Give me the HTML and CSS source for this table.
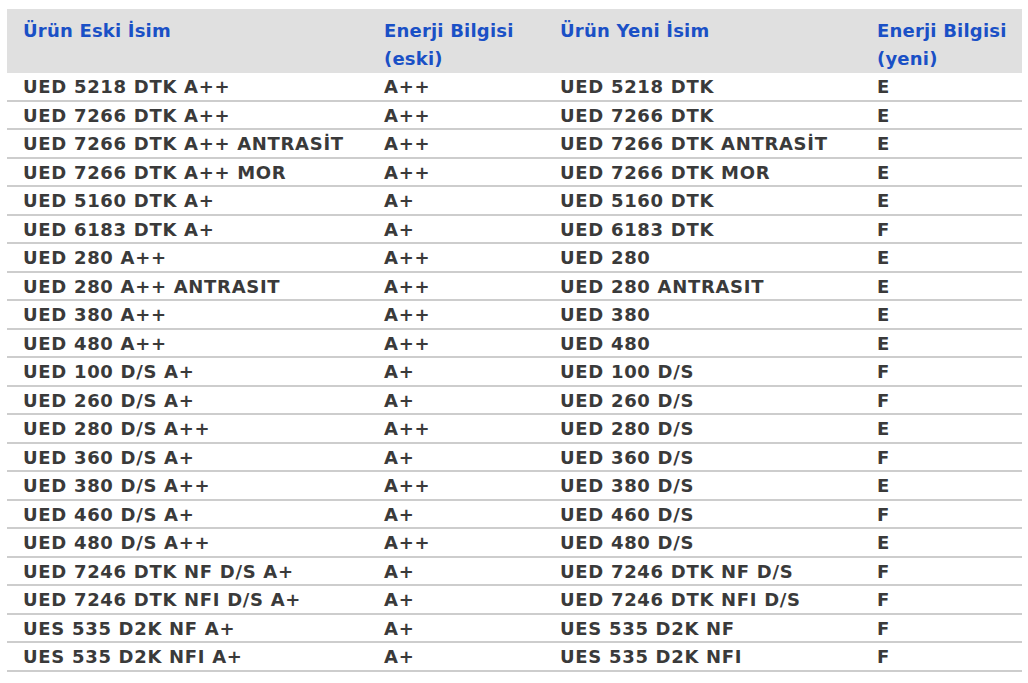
FILE: index.html
```html
<!DOCTYPE html>
<html lang="tr">
<head>
<meta charset="utf-8">
<title>Enerji Bilgisi</title>
<link rel="stylesheet" href="styles.css">
</head>
<body>
<div class="table">
  <div class="row head">
    <div class="cell">Ürün Eski İsim</div>
    <div class="cell">Enerji Bilgisi<br>(eski)</div>
    <div class="cell">Ürün Yeni İsim</div>
    <div class="cell">Enerji Bilgisi<br>(yeni)</div>
  </div>
  <div class="row"><div class="cell">UED 5218 DTK A++</div><div class="cell">A++</div><div class="cell">UED 5218 DTK</div><div class="cell">E</div></div>
  <div class="row"><div class="cell">UED 7266 DTK A++</div><div class="cell">A++</div><div class="cell">UED 7266 DTK</div><div class="cell">E</div></div>
  <div class="row"><div class="cell">UED 7266 DTK A++ ANTRASİT</div><div class="cell">A++</div><div class="cell">UED 7266 DTK ANTRASİT</div><div class="cell">E</div></div>
  <div class="row"><div class="cell">UED 7266 DTK A++ MOR</div><div class="cell">A++</div><div class="cell">UED 7266 DTK MOR</div><div class="cell">E</div></div>
  <div class="row"><div class="cell">UED 5160 DTK A+</div><div class="cell">A+</div><div class="cell">UED 5160 DTK</div><div class="cell">E</div></div>
  <div class="row"><div class="cell">UED 6183 DTK A+</div><div class="cell">A+</div><div class="cell">UED 6183 DTK</div><div class="cell">F</div></div>
  <div class="row"><div class="cell">UED 280 A++</div><div class="cell">A++</div><div class="cell">UED 280</div><div class="cell">E</div></div>
  <div class="row"><div class="cell">UED 280 A++ ANTRASIT</div><div class="cell">A++</div><div class="cell">UED 280 ANTRASIT</div><div class="cell">E</div></div>
  <div class="row"><div class="cell">UED 380 A++</div><div class="cell">A++</div><div class="cell">UED 380</div><div class="cell">E</div></div>
  <div class="row"><div class="cell">UED 480 A++</div><div class="cell">A++</div><div class="cell">UED 480</div><div class="cell">E</div></div>
  <div class="row"><div class="cell">UED 100 D/S A+</div><div class="cell">A+</div><div class="cell">UED 100 D/S</div><div class="cell">F</div></div>
  <div class="row"><div class="cell">UED 260 D/S A+</div><div class="cell">A+</div><div class="cell">UED 260 D/S</div><div class="cell">F</div></div>
  <div class="row"><div class="cell">UED 280 D/S A++</div><div class="cell">A++</div><div class="cell">UED 280 D/S</div><div class="cell">E</div></div>
  <div class="row"><div class="cell">UED 360 D/S A+</div><div class="cell">A+</div><div class="cell">UED 360 D/S</div><div class="cell">F</div></div>
  <div class="row"><div class="cell">UED 380 D/S A++</div><div class="cell">A++</div><div class="cell">UED 380 D/S</div><div class="cell">E</div></div>
  <div class="row"><div class="cell">UED 460 D/S A+</div><div class="cell">A+</div><div class="cell">UED 460 D/S</div><div class="cell">F</div></div>
  <div class="row"><div class="cell">UED 480 D/S A++</div><div class="cell">A++</div><div class="cell">UED 480 D/S</div><div class="cell">E</div></div>
  <div class="row"><div class="cell">UED 7246 DTK NF D/S A+</div><div class="cell">A+</div><div class="cell">UED 7246 DTK NF D/S</div><div class="cell">F</div></div>
  <div class="row"><div class="cell">UED 7246 DTK NFI D/S A+</div><div class="cell">A+</div><div class="cell">UED 7246 DTK NFI D/S</div><div class="cell">F</div></div>
  <div class="row"><div class="cell">UES 535 D2K NF A+</div><div class="cell">A+</div><div class="cell">UES 535 D2K NF</div><div class="cell">F</div></div>
  <div class="row"><div class="cell">UES 535 D2K NFI A+</div><div class="cell">A+</div><div class="cell">UES 535 D2K NFI</div><div class="cell">F</div></div>
</div>
</body>
</html>
```
FILE: styles.css
```css
html, body {
  margin: 0;
  padding: 0;
  background: #ffffff;
}

body {
  padding: 9px 6px 0 7px;
  font-family: "DejaVu Sans", "Liberation Sans", sans-serif;
  font-weight: bold;
  font-size: 18px;
  letter-spacing: 0.7px;
  color: #3a3a3a;
}

.table {
  width: 1015px;
  display: flex;
  flex-direction: column;
}

.row {
  display: grid;
  grid-template-columns: 361px 176px 317px 161px;
  height: 26.5px;
  line-height: 28px;
  border-bottom: 2px solid #cdcdcd;
}

.row.head {
  height: 64px;
  line-height: 28px;
  padding-top: 8px;
  box-sizing: border-box;
  background: #e0e0e0;
  border-bottom: none;
  color: #1a50c6;
  letter-spacing: 0.2px;
}

.cell {
  padding-left: 16px;
  white-space: nowrap;
}
```
